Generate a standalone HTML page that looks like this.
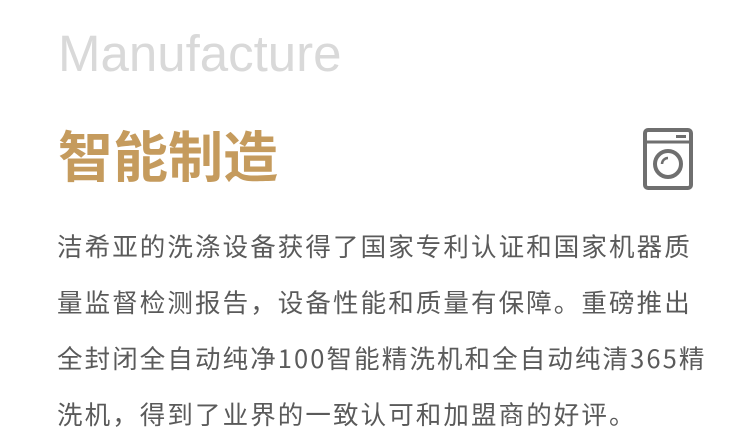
<!DOCTYPE html>
<html><head><meta charset="utf-8"><style>
html,body{margin:0;padding:0;background:#fff;width:750px;height:445px;overflow:hidden}
.en{position:absolute;left:58px;top:28px;font:51px/1 "Liberation Sans",sans-serif;color:#d9d9d9;white-space:nowrap}
.t{position:absolute;left:58px;top:131px;font:bold 55px/1 "Liberation Sans","Noto Sans CJK SC",sans-serif;color:#c59b5d;white-space:nowrap}
.p{position:absolute;left:57px;top:218px;width:680px;font:25.5px/56px "Noto Sans CJK SC",sans-serif;color:#5a5a5a;letter-spacing:2.1px}
.p div{white-space:nowrap}
svg{position:absolute;left:640px;top:126px}
</style></head><body>
<div class="en">Manufacture</div>
<div class="t">智能制造</div>
<svg width="56" height="66" viewBox="0 0 56 66">
<rect x="5" y="4" width="46" height="58" rx="3" fill="none" stroke="#6f6f6f" stroke-width="4"/>
<line x1="5" y1="16" x2="51" y2="16" stroke="#6f6f6f" stroke-width="3"/>
<rect x="36" y="9" width="10" height="3" fill="#6f6f6f"/>
<circle cx="28" cy="38" r="13" fill="none" stroke="#6f6f6f" stroke-width="4"/>
<path d="M22 38 A6 6 0 0 1 28 32" fill="none" stroke="#6f6f6f" stroke-width="2.5"/>
</svg>
<div class="p">
<div>洁希亚的洗涤设备获得了国家专利认证和国家机器质</div>
<div>量监督检测报告，设备性能和质量有保障。重磅推出</div>
<div>全封闭全自动纯净100智能精洗机和全自动纯清365精</div>
<div>洗机，得到了业界的一致认可和加盟商的好评。</div>
</div>
</body></html>
